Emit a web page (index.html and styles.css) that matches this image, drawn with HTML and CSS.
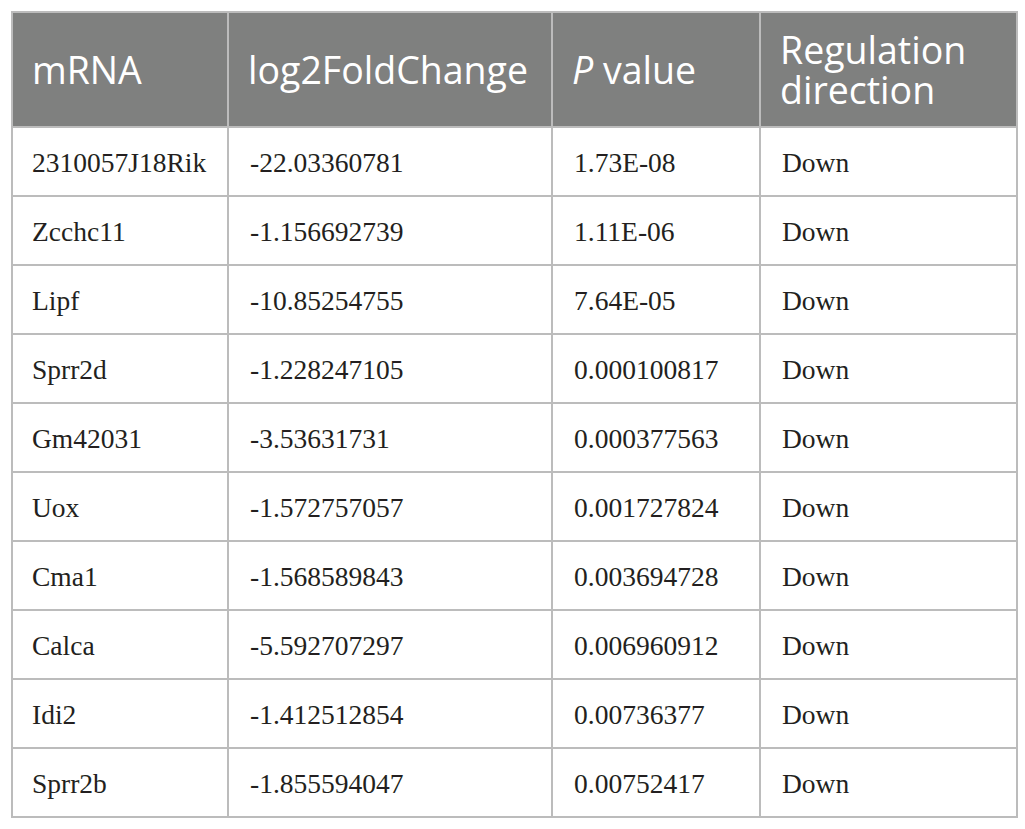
FILE: index.html
```html
<!DOCTYPE html>
<html lang="en">
<head>
<meta charset="utf-8">
<title>mRNA table</title>
<link rel="stylesheet" href="styles.css">
</head>
<body>
<table class="data">
  <colgroup>
    <col class="c1"><col class="c2"><col class="c3"><col class="c4">
  </colgroup>
  <thead>
    <tr>
      <th>mRNA</th>
      <th>log2FoldChange</th>
      <th><i>P</i> value</th>
      <th>Regulation direction</th>
    </tr>
  </thead>
  <tbody>
    <tr><td>2310057J18Rik</td><td>-22.03360781</td><td>1.73E-08</td><td>Down</td></tr>
    <tr><td>Zcchc11</td><td>-1.156692739</td><td>1.11E-06</td><td>Down</td></tr>
    <tr><td>Lipf</td><td>-10.85254755</td><td>7.64E-05</td><td>Down</td></tr>
    <tr><td>Sprr2d</td><td>-1.228247105</td><td>0.000100817</td><td>Down</td></tr>
    <tr><td>Gm42031</td><td>-3.53631731</td><td>0.000377563</td><td>Down</td></tr>
    <tr><td>Uox</td><td>-1.572757057</td><td>0.001727824</td><td>Down</td></tr>
    <tr><td>Cma1</td><td>-1.568589843</td><td>0.003694728</td><td>Down</td></tr>
    <tr><td>Calca</td><td>-5.592707297</td><td>0.006960912</td><td>Down</td></tr>
    <tr><td>Idi2</td><td>-1.412512854</td><td>0.00736377</td><td>Down</td></tr>
    <tr><td>Sprr2b</td><td>-1.855594047</td><td>0.00752417</td><td>Down</td></tr>
  </tbody>
</table>
</body>
</html>
```
FILE: styles.css
```css
html, body {
  margin: 0;
  padding: 0;
  background: #ffffff;
}
body {
  padding: 11px 0 0 11px;
}
.data {
  border-collapse: collapse;
  table-layout: fixed;
  width: 1005px;
  border: 2px solid #b8b8b8;
}
.c1 { width: 216px; }
.c2 { width: 324px; }
.c3 { width: 208px; }
.c4 { width: 257px; }
.data th,
.data td {
  border: 2px solid #bcbcbc;
  text-align: left;
  vertical-align: middle;
  padding: 0 20px;
}
.data th {
  background: #7f807f;
  color: #ffffff;
  font-family: "Open Sans", "DejaVu Sans", sans-serif;
  font-weight: 400;
  font-size: 37.5px;
  line-height: 40px;
  height: 113px;
  padding-left: 19px;
}
.data th i {
  font-style: italic;
}
.data td {
  font-family: "Liberation Serif", "Times New Roman", serif;
  font-size: 27.5px;
  line-height: 32px;
  color: #231f20;
  height: 65px;
  padding-top: 2px;
  padding-bottom: 0;
  padding-left: 21px;
}
.data td:first-child {
  padding-left: 19px;
}
```
